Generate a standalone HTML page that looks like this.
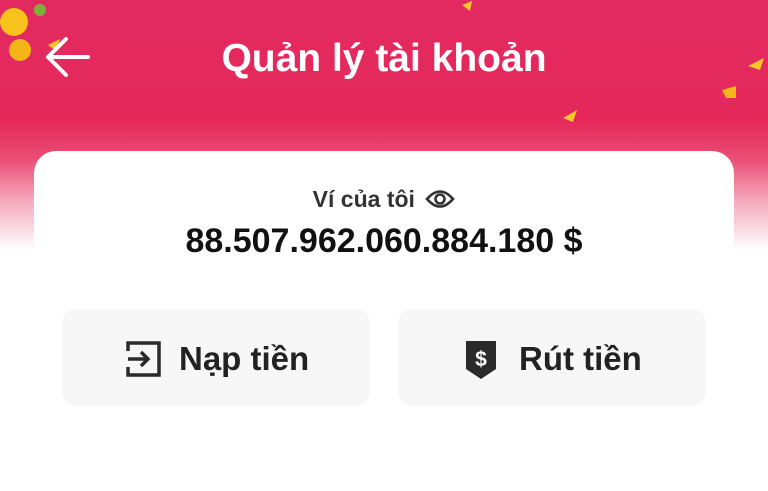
<!DOCTYPE html>
<html><head><meta charset="utf-8"><style>
html,body{margin:0;padding:0;width:768px;height:480px;overflow:hidden;background:#fff;font-family:"Liberation Sans",sans-serif}
.bg{position:absolute;left:0;top:0;width:768px;height:250px;background:linear-gradient(to bottom,#e22a61 0%,#e5285a 48%,#ea4f76 64%,#f4a8bb 80%,#fff 100%)}
.title{position:absolute;left:0;width:768px;top:37px;text-align:center;color:#fff;font-weight:bold;font-size:39px}
.card{position:absolute;left:34px;top:151px;width:700px;height:340px;background:#fff;border-radius:22px}
.lbl{position:absolute;left:0;width:100%;top:186px;text-align:center;font-size:23px;font-weight:bold;color:#333}
.amt{position:absolute;left:0;width:100%;top:222px;text-align:center;font-size:34px;font-weight:bold;color:#111}
.btn{position:absolute;top:309px;width:308px;height:97px;background:#f7f7f7;border-radius:14px}
.btn span{position:absolute;top:31px;font-size:33px;font-weight:bold;color:#222}
</style></head><body>
<div class="bg"></div>
<svg style="position:absolute;left:0;top:0" width="768" height="160">
<circle cx="14" cy="22" r="14" fill="#f7c31c"/><circle cx="20" cy="50" r="11" fill="#f5b417"/><circle cx="40" cy="10" r="6" fill="#7bb13b"/>
<path d="M48 45 l12 -6 l-4 12z" fill="#f8c52a"/><path d="M462 5 l10 -4 l-2 10z" fill="#f8c52a"/>
<path d="M748 66 l16 -8 l-4 12z" fill="#f8c52a"/><path d="M722 90 l14 -4 l0 12 l-10 0z" fill="#f5b619"/><path d="M563 118 l14 -8 l-4 12z" fill="#f8c52a"/>
<path d="M48 57 H88 M66 39 L48 57 L66 75" stroke="#fff" stroke-width="4" fill="none" stroke-linecap="round" stroke-linejoin="round"/>
</svg>
<div class="title">Quản lý tài khoản</div>
<div class="card"></div>
<div class="lbl">Ví của tôi <svg width="30" height="22" viewBox="0 0 30 22" style="vertical-align:-3px;margin-left:4px"><path d="M2 11 Q15 -4 28 11 Q15 26 2 11Z" fill="none" stroke="#333" stroke-width="2.6"/><circle cx="15" cy="11" r="4.5" fill="none" stroke="#333" stroke-width="2.6"/></svg></div>
<div class="amt">88.507.962.060.884.180 $</div>
<div class="btn" style="left:62px">
<svg style="position:absolute;left:64px;top:32px" width="36" height="36" viewBox="0 0 36 36"><path d="M2 10 V2 H33 V34 H2 V26" fill="none" stroke="#2a2a2a" stroke-width="3.5"/><path d="M2 18 H22 M15 11 L22 18 L15 25" fill="none" stroke="#2a2a2a" stroke-width="3.5"/></svg>
<span style="left:117px">Nạp tiền</span></div>
<div class="btn" style="left:398px">
<svg style="position:absolute;left:68px;top:32px" width="30" height="38" viewBox="0 0 30 38"><path d="M0 0 H30 V28 L15 38 L0 28Z" fill="#2a2a2a"/><text x="15" y="25" font-size="21" font-weight="bold" fill="#fff" text-anchor="middle" font-family="Liberation Sans">$</text></svg>
<span style="left:121px">Rút tiền</span></div>
</body></html>
